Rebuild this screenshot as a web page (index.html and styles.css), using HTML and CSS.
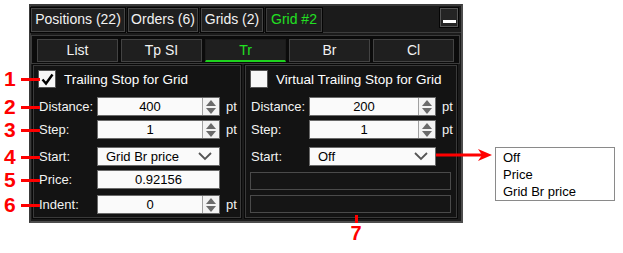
FILE: index.html
```html
<!DOCTYPE html>
<html lang="en">
<head>
    <meta charset="UTF-8">
    <title>Grid #2 - Tr</title>
    <link rel="stylesheet" href="styles.css">
</head>
<body>
    <div class="canvas">
        <div class="panel">
            <!-- Top tabs -->
            <div class="tabs">
                <div class="tab tab-positions">Positions (22)</div>
                <div class="tab tab-orders">Orders (6)</div>
                <div class="tab tab-grids">Grids (2)</div>
                <div class="tab tab-grid active">Grid #2</div>
                <div class="tabs-spacer"></div>
                <div class="minimize"><span></span></div>
            </div>

            <!-- Sub tabs -->
            <div class="subtabs">
                <div class="subtab">List</div>
                <div class="subtab">Tp SI</div>
                <div class="subtab active">Tr</div>
                <div class="subtab">Br</div>
                <div class="subtab">Cl</div>
            </div>

            <div class="groups">
                <!-- Trailing stop -->
                <div class="group group-left">
                    <div class="check-row">
                        <div class="checkbox checked">
                            <svg width="13" height="13" viewBox="0 0 13 13"><path d="M1.5 6.5 L5 10.5 L11.5 1.5" fill="none" stroke="#000" stroke-width="2.4"/></svg>
                        </div>
                        <span>Trailing Stop for Grid</span>
                    </div>
                    <div class="row row-first">
                        <span class="label">Distance:</span>
                        <div class="field">
                            <div class="input">400</div>
                            <div class="spin"><i class="up"></i><i class="down"></i></div>
                        </div>
                        <span class="unit">pt</span>
                    </div>
                    <div class="row">
                        <span class="label">Step:</span>
                        <div class="field">
                            <div class="input">1</div>
                            <div class="spin"><i class="up"></i><i class="down"></i></div>
                        </div>
                        <span class="unit">pt</span>
                    </div>
                    <div class="row row-gap">
                        <span class="label">Start:</span>
                        <div class="field select">
                            <div class="input">Grid Br price</div>
                            <svg class="chev" width="14" height="9" viewBox="0 0 14 9"><path d="M1 1 L7 7 L13 1" fill="none" stroke="#555" stroke-width="1.8"/></svg>
                        </div>
                    </div>
                    <div class="row">
                        <span class="label">Price:</span>
                        <div class="field">
                            <div class="input">0.92156</div>
                        </div>
                    </div>
                    <div class="row row-last">
                        <span class="label">Indent:</span>
                        <div class="field">
                            <div class="input">0</div>
                            <div class="spin"><i class="up"></i><i class="down"></i></div>
                        </div>
                        <span class="unit">pt</span>
                    </div>
                </div>

                <!-- Virtual trailing stop -->
                <div class="group group-right">
                    <div class="check-row">
                        <div class="checkbox"></div>
                        <span>Virtual Trailing Stop for Grid</span>
                    </div>
                    <div class="row row-first">
                        <span class="label">Distance:</span>
                        <div class="field">
                            <div class="input">200</div>
                            <div class="spin"><i class="up"></i><i class="down"></i></div>
                        </div>
                        <span class="unit">pt</span>
                    </div>
                    <div class="row">
                        <span class="label">Step:</span>
                        <div class="field">
                            <div class="input">1</div>
                            <div class="spin"><i class="up"></i><i class="down"></i></div>
                        </div>
                        <span class="unit">pt</span>
                    </div>
                    <div class="row row-gap">
                        <span class="label">Start:</span>
                        <div class="field select">
                            <div class="input">Off</div>
                            <svg class="chev" width="14" height="9" viewBox="0 0 14 9"><path d="M1 1 L7 7 L13 1" fill="none" stroke="#555" stroke-width="1.8"/></svg>
                        </div>
                    </div>
                    <div class="empty-box box-one"></div>
                    <div class="empty-box box-two"></div>
                </div>
            </div>
        </div>

        <!-- Dropdown list opened from Start -->
        <div class="dropdown">
            <div>Off</div>
            <div>Price</div>
            <div>Grid Br price</div>
        </div>

        <!-- Annotations -->
        <div class="mark" style="top: 67px;"><b>1</b><i></i></div>
        <div class="mark" style="top: 95px;"><b>2</b><i></i></div>
        <div class="mark" style="top: 118px;"><b>3</b><i></i></div>
        <div class="mark" style="top: 145px;"><b>4</b><i></i></div>
        <div class="mark" style="top: 168px;"><b>5</b><i></i></div>
        <div class="mark" style="top: 193px;"><b>6</b><i></i></div>

        <div class="arrow">
            <svg width="58" height="14" viewBox="0 0 58 14"><path d="M0 7 H48" stroke="#f00" stroke-width="3"/><path d="M42 1 L56 7 L42 13 L46 7 Z" fill="#f00"/></svg>
        </div>

        <div class="mark-seven"><i></i><b>7</b></div>
    </div>
</body>
</html>
```

FILE: styles.css
```css
* {
    margin: 0;
    padding: 0;
    box-sizing: border-box;
}

body {
    background: #fff;
    font-family: "Liberation Sans", Arial, sans-serif;
    font-size: 13px;
}

.canvas {
    position: relative;
    width: 623px;
    height: 253px;
    padding: 4px 0 0 29px;
}

.panel {
    width: 434px;
    height: 219px;
    background: #1b1b1b;
    border: 2px solid #4d4d4d;
    border-top-color: #3a3a3a;
    border-left-color: #3a3a3a;
    color: #fff;
    display: flex;
    flex-direction: column;
}

/* top tabs */
.tabs {
    display: flex;
    align-items: flex-start;
    height: 27px;
    padding: 2px 0 0 0;
    border-bottom: 1px solid #3c3c3c;
}

.tab {
    height: 24px;
    line-height: 21px;
    text-align: center;
    background: #1f1f1f;
    border: 1px solid #454545;
    outline: 1px solid #050505;
    margin-right: 3px;
    color: #f2f2f2;
    font-size: 14px;
}

.tab-positions { width: 94px; }
.tab-orders { width: 70px; }
.tab-grids { width: 62px; }
.tab-grid { width: 56px; }

.tab.active {
    color: #22e022;
    border-color: #3d3d3d;
}

.tabs-spacer {
    flex: 1;
}

.minimize {
    width: 18px;
    height: 19px;
    margin-right: 3px;
    border: 1px solid #555;
    outline: 1px solid #050505;
    background: #242424;
    display: flex;
    align-items: flex-end;
    justify-content: center;
    padding-bottom: 3px;
}

.minimize span {
    width: 13px;
    height: 3px;
    background: #fff;
}

/* sub tabs */
.subtabs {
    display: flex;
    gap: 3px;
    height: 29px;
    margin: 2px 1px 0 0;
    padding: 3px 3px 0 5px;
    background: #0b0b0b;
    border: 1px solid #3c3c3c;
}

.subtab {
    width: 81px;
    height: 23px;
    line-height: 21px;
    text-align: center;
    background: #1f1f1f;
    border: 1px solid #434343;
    color: #f2f2f2;
    font-size: 14px;
}

.subtab.active {
    color: #22e022;
    border-bottom: 2px solid #1ed21e;
    border-left-color: #1b1b1b;
    border-right-color: #1b1b1b;
    border-top-color: #1b1b1b;
}

/* groups */
.groups {
    display: flex;
    gap: 4px;
    padding: 1px 3px 0 2px;
}

.group {
    height: 153px;
    background: #131313;
    border: 1px solid #3a3a3a;
    outline: 1px solid #080808;
    padding: 4px 0 0 4px;
}

.group-left {
    width: 208px;
}

.group-right {
    width: 212px;
}

.check-row {
    display: flex;
    align-items: center;
    gap: 8px;
    height: 18px;
    font-size: 13.5px;
}

.checkbox {
    width: 18px;
    height: 18px;
    background: #f7f7f7;
    border: 1px solid #555;
    display: flex;
    align-items: center;
    justify-content: center;
}

.row {
    display: flex;
    align-items: center;
    height: 19px;
    margin-top: 4px;
}

.row-first {
    margin-top: 9px;
}

.row-gap {
    margin-top: 8px;
}

.row-last {
    margin-top: 6px;
}

.label {
    width: 59px;
    padding-left: 1px;
    color: #f2f2f2;
}

.field {
    display: flex;
    height: 19px;
    width: 123px;
    background: #fafafa;
    border: 1px solid #6a6a6a;
    color: #000;
}

.group-right .field {
    width: 127px;
}

.input {
    flex: 1;
    text-align: center;
    line-height: 17px;
}

.spin {
    width: 17px;
    border-left: 1px solid #a0a0a0;
    display: flex;
    flex-direction: column;
    align-items: center;
    justify-content: center;
    gap: 2px;
    background: #f3f3f3;
}

.spin i {
    width: 0;
    height: 0;
    border-left: 5px solid transparent;
    border-right: 5px solid transparent;
}

.spin .up {
    border-bottom: 6px solid #6a6a6a;
}

.spin .down {
    border-top: 6px solid #6a6a6a;
}

.unit {
    margin-left: 6px;
    color: #f2f2f2;
}

.select .input {
    text-align: left;
    padding-left: 8px;
}

.select .chev {
    margin: 4px 7px 0 0;
}

.empty-box {
    width: 201px;
    height: 18px;
    border: 1px solid #4a4a4a;
    background: #151515;
}

.box-one {
    margin-top: 6px;
}

.box-two {
    margin-top: 5px;
}

/* open dropdown list */
.dropdown {
    position: absolute;
    left: 495px;
    top: 147px;
    width: 120px;
    height: 54px;
    background: #fff;
    border: 1px solid #8a8a8a;
    padding: 1px 0 0 7px;
    color: #000;
    line-height: 17px;
}

/* red annotations */
.mark {
    position: absolute;
    left: 4px;
    display: flex;
    align-items: center;
    height: 24px;
}

.mark b {
    color: #f00;
    font-size: 21px;
    font-weight: bold;
    width: 16px;
}

.mark i {
    width: 19px;
    height: 3px;
    background: #f00;
    margin-left: 1px;
}

.arrow {
    position: absolute;
    left: 436px;
    top: 148px;
    height: 14px;
}

.mark-seven {
    position: absolute;
    left: 349px;
    top: 215px;
    width: 14px;
    display: flex;
    flex-direction: column;
    align-items: center;
}

.mark-seven i {
    width: 3px;
    height: 8px;
    background: #f00;
}

.mark-seven b {
    color: #f00;
    font-size: 20px;
    font-weight: bold;
    line-height: 20px;
}
```
